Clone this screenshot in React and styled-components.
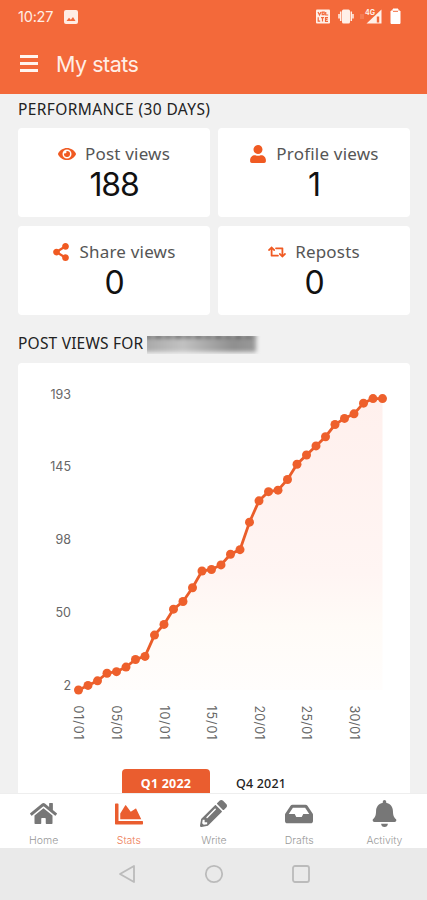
import React, { Fragment, useState } from "react";
import styled, { createGlobalStyle } from "styled-components";
import {
  FaBell,
  FaChartArea,
  FaEye,
  FaHome,
  FaInbox,
  FaPencilAlt,
  FaRetweet,
  FaShareAlt,
  FaUser,
} from "react-icons/fa";

const GlobalStyle = createGlobalStyle`
  * {
    box-sizing: border-box;
  }

  body {
    margin: 0;
    background: #f1f1f1;
    font-family: "Noto Sans", sans-serif;
  }
`;

const Screen = styled.div`
  display: flex;
  flex-direction: column;
  width: 427px;
  height: 900px;
  overflow: hidden;
  background: #f1f1f1;
`;

const Header = styled.header`
  flex: none;
  height: 94px;
  background: #f3693a;
  color: #ffeee5;
  font-family: Inter, sans-serif;
`;

const StatusBar = styled.div`
  display: flex;
  align-items: center;
  height: 33px;
  padding: 0 26px 0 18px;
`;

const Clock = styled.span`
  width: 46px;
  font-size: 14.5px;
  letter-spacing: -0.2px;
`;

const StatusIcons = styled.div`
  display: flex;
  margin-left: auto;
`;

const TitleBar = styled.div`
  display: flex;
  align-items: center;
  height: 61px;
  padding: 0 20px;
`;

const MenuButton = styled.button`
  display: flex;
  flex-direction: column;
  gap: 4px;
  width: 18px;
  margin-right: 18px;
  padding: 0;
  border: 0;
  background: none;
`;

const MenuLine = styled.span`
  height: 3px;
  background: #fff5ef;
`;

const Title = styled.h1`
  margin: 0;
  font-size: 21.5px;
  font-weight: 400;
  letter-spacing: -0.5px;
`;

const Content = styled.main`
  flex: 1;
  min-height: 0;
  padding: 0 17px 0 18px;
  overflow: hidden;
`;

const SectionTitle = styled.h2`
  display: flex;
  align-items: center;
  height: ${({ $height }) => $height}px;
  margin: 0;
  padding: ${({ $padding }) => $padding};
  color: #222;
  font-size: 15.5px;
  font-weight: 400;
  letter-spacing: ${({ $spacing }) => $spacing}px;
  white-space: nowrap;
`;

const HiddenName = styled.span`
  width: 116px;
  height: 18px;
  margin: 4px 0 0 4px;
  overflow: hidden;
`;

const Smudge = styled.span`
  display: block;
  width: 112px;
  height: 18px;
  margin: -2px 0 0 -3px;
  background:
    repeating-linear-gradient(90deg, #666 0 8px, #999 8px 11px, #555 11px 18px, #aaa 18px 20px) top / 100% 4px no-repeat,
    linear-gradient(90deg, #a8a8a8, #c2c2c2 35%, #8f8f8f 80%, #999);
  filter: blur(2px);
`;

const StatGrid = styled.div`
  display: grid;
  grid-template-columns: 1fr 1fr;
  grid-template-rows: 89px 89px;
  gap: 9px 8px;
`;

const StatCard = styled.div`
  display: flex;
  flex-direction: column;
  align-items: center;
  padding-top: 12px;
  border-radius: 4px;
  background: #fff;
`;

const StatLabel = styled.div`
  display: flex;
  align-items: center;
  gap: 9px;
  height: 27px;
  color: #555;
  font-size: 17px;
  letter-spacing: 0.2px;

  svg {
    color: #f05a22;
  }
`;

const StatValue = styled.div`
  color: #111;
  font-family: Inter, sans-serif;
  font-size: 32px;
  line-height: 36px;
  letter-spacing: -1.2px;
`;

const ChartCard = styled.section`
  height: 460px;
  border-radius: 4px;
  background: #fff;
`;

const Chart = styled.svg`
  display: block;
  font-family: Inter, sans-serif;
`;

const Quarters = styled.div`
  display: flex;
  gap: 7px;
  padding: 6px 0 0 104px;
`;

const QuarterButton = styled.button`
  width: 88px;
  height: 30px;
  padding: 0;
  border: 0;
  border-radius: 4px;
  background: ${({ $selected }) => ($selected ? "#ea5d2f" : "#fff")};
  color: ${({ $selected }) => ($selected ? "#fff" : "#222")};
  font-family: "Noto Sans", sans-serif;
  font-size: 12.5px;
  font-weight: ${({ $selected }) => ($selected ? 700 : 500)};
  letter-spacing: 0.2px;
  line-height: 28px;
`;

const TabBar = styled.nav`
  display: grid;
  flex: none;
  grid-template-columns: repeat(5, 1fr);
  height: 55px;
  padding-left: 1px;
  background: #fff;
  border-top: 1px solid #eee;
`;

const Tab = styled.a`
  display: flex;
  flex-direction: column;
  align-items: center;
  color: ${({ $active }) => ($active ? "#ea5d2f" : "#777")};
`;

const TabIcon = styled.span`
  display: flex;
  align-items: center;
  height: 39px;
`;

const TabLabel = styled.span`
  color: ${({ $active }) => ($active ? "#ee7c57" : "#999")};
  font-family: Inter, sans-serif;
  font-size: 10.5px;
  font-weight: 300;
  line-height: 16px;
`;

const SystemBar = styled.div`
  display: flex;
  flex: none;
  justify-content: center;
  align-items: center;
  gap: 68px;
  height: 52px;
  background: #eaeaea;
`;

const stats = [
  { label: "Post views", value: 188, Icon: FaEye },
  { label: "Profile views", value: 1, Icon: FaUser },
  { label: "Share views", value: 0, Icon: FaShareAlt },
  { label: "Reposts", value: 0, Icon: FaRetweet },
];

const tabs = [
  { name: "Home", Icon: FaHome, size: 27 },
  { name: "Stats", Icon: FaChartArea, size: 28 },
  { name: "Write", Icon: FaPencilAlt, size: 27 },
  { name: "Drafts", Icon: FaInbox, size: 28 },
  { name: "Activity", Icon: FaBell, size: 27 },
];

const views = [
  2, 5, 8, 13, 14, 17, 22, 24, 38, 45, 55, 60, 69, 80, 81, 84, 91, 94, 112, 126,
  132, 133, 140, 150, 156, 162, 168, 176, 180, 183, 190, 193, 193,
];

const yLabels = [193, 145, 98, 50, 2];
const xLabels = [
  { text: "01/01", day: 0 },
  { text: "05/01", day: 4 },
  { text: "10/01", day: 9 },
  { text: "15/01", day: 14 },
  { text: "20/01", day: 19 },
  { text: "25/01", day: 24 },
  { text: "30/01", day: 29 },
];

const getX = (day) => 60.5 + day * 9.5;
const getY = (value) => 327 - (value - 2) * 1.5257;

const ViewsChart = () => {
  const line = views.map((value, day) => `${getX(day)},${getY(value)}`).join(" ");
  const area = `${getX(0)},327 ${line} ${getX(views.length - 1)},327`;

  return (
    <Chart width="392" height="400" viewBox="0 0 392 400">
      <defs>
        <linearGradient id="area" x1="0" y1="0" x2="0" y2="1">
          <stop offset="0" stopColor="#fff0ed" />
          <stop offset="0.6" stopColor="#fff5f3" />
          <stop offset="0.78" stopColor="#fffbf7" />
          <stop offset="1" stopColor="#fffdfc" />
        </linearGradient>
      </defs>
      {yLabels.map((value, i) => (
        <text key={value} x="53" y={35.5 + i * 72.9} textAnchor="end" fontSize="12.5" fill="#666">
          {value}
        </text>
      ))}
      <polygon points={area} fill="url(#area)" />
      <polyline points={line} fill="none" stroke="#ea5d2a" strokeWidth="2.8" />
      {views.map((value, day) => (
        <circle key={day} cx={getX(day)} cy={getY(value)} r="4.5" fill="#ee602c" />
      ))}
      {xLabels.map(({ text, day }) => (
        <text
          key={text}
          transform={`translate(${getX(day) - 4.5}, 342.5) rotate(90)`}
          fontSize="12.5"
          fill="#666"
          textLength="34"
        >
          {text}
        </text>
      ))}
    </Chart>
  );
};

const PictureIcon = () => (
  <svg width="14" height="14" viewBox="0 0 14 14">
    <rect width="14" height="14" rx="2" fill="#ffece3" />
    <path d="M2.5 11 L5 7.7 L6.8 9.7 L9 7 L11.5 11 Z" fill="#f3693a" />
  </svg>
);

const PhoneIcons = () => (
  <svg width="86" height="17" viewBox="0 0 86 17">
    <rect x="1" y="1.5" width="14" height="14" rx="1" fill="#fff0e8" />
    <g fill="none" stroke="#f3693a" strokeWidth="1.2">
      <path d="M3 4 L4.5 7 L6 4 M7.2 4.2 h2 v2.4 h-2 z M10.7 4 v3 h2.5" />
      <path d="M3.2 9.2 v4 h2 M6 9.6 h3 M7.5 9.6 v4 M13 9.6 h-2.5 v3.8 h2.5 M10.5 11.4 h2" />
    </g>
    <rect x="27" y="1.5" width="8" height="14" rx="1.5" fill="#fff0e8" />
    <path d="M25.7 3.5 v9.5 M36.3 3.5 v9.5 M24 6 v4.5 M38 6 v4.5" stroke="#fff0e8" strokeWidth="1.5" />
    <path d="M46 6 v5 M48 6 v5" stroke="#f79a78" strokeWidth="0.8" />
    <path d="M66.5 1.5 V15.5 H51.5 Z" fill="#fff0e8" />
    <path d="M63 8.5 V14.5" stroke="#f3693a" strokeWidth="2.4" />
    <text x="50" y="6.5" fontSize="7" fontWeight="700" fill="#fff0e8">4G</text>
    <path d="M76 3 h2 v-2 h5 v2 h2 v12.5 h-9 z" fill="#fff" stroke="#fff" strokeLinejoin="round" />
    <path d="M78 3.3 h5" stroke="#f3693a" strokeWidth="1" />
  </svg>
);

const App = () => {
  const [activeTab, setActiveTab] = useState("Stats");
  const [quarter, setQuarter] = useState("Q1 2022");

  return (
    <Fragment>
      <GlobalStyle />
      <Screen>
        <Header>
          <StatusBar>
            <Clock>10:27</Clock>
            <PictureIcon />
            <StatusIcons>
              <PhoneIcons />
            </StatusIcons>
          </StatusBar>
          <TitleBar>
            <MenuButton aria-label="Menu">
              <MenuLine />
              <MenuLine />
              <MenuLine />
            </MenuButton>
            <Title>My stats</Title>
          </TitleBar>
        </Header>
        <Content>
          <SectionTitle $height={34} $padding="0 0 4px" $spacing={0.4}>
            PERFORMANCE (30 DAYS)
          </SectionTitle>
          <StatGrid>
            {stats.map(({ label, value, Icon }) => (
              <StatCard key={label}>
                <StatLabel>
                  <Icon size={18} />
                  {label}
                </StatLabel>
                <StatValue>{value}</StatValue>
              </StatCard>
            ))}
          </StatGrid>
          <SectionTitle $height={48} $padding="8px 0 0" $spacing={0.2}>
            POST VIEWS FOR
            <HiddenName>
              <Smudge />
            </HiddenName>
          </SectionTitle>
          <ChartCard>
            <ViewsChart />
            <Quarters>
              {["Q1 2022", "Q4 2021"].map((name) => (
                <QuarterButton key={name} $selected={quarter === name} onClick={() => setQuarter(name)}>
                  {name}
                </QuarterButton>
              ))}
            </Quarters>
          </ChartCard>
        </Content>
        <TabBar>
          {tabs.map(({ name, Icon, size }) => (
            <Tab key={name} $active={activeTab === name} onClick={() => setActiveTab(name)}>
              <TabIcon>
                <Icon size={size} />
              </TabIcon>
              <TabLabel $active={activeTab === name}>{name}</TabLabel>
            </Tab>
          ))}
        </TabBar>
        <SystemBar>
          <svg width="18" height="20" viewBox="0 0 18 20">
            <path d="M2 10 L16 2 V18 Z" fill="none" stroke="#bbb" strokeWidth="1.8" strokeLinejoin="round" />
          </svg>
          <svg width="20" height="20" viewBox="0 0 20 20">
            <circle cx="10" cy="10" r="8.2" fill="none" stroke="#bbb" strokeWidth="1.8" />
          </svg>
          <svg width="18" height="20" viewBox="0 0 18 20">
            <rect x="1" y="2" width="16" height="16" rx="2" fill="none" stroke="#bbb" strokeWidth="1.8" />
          </svg>
        </SystemBar>
      </Screen>
    </Fragment>
  );
};

export default App;
